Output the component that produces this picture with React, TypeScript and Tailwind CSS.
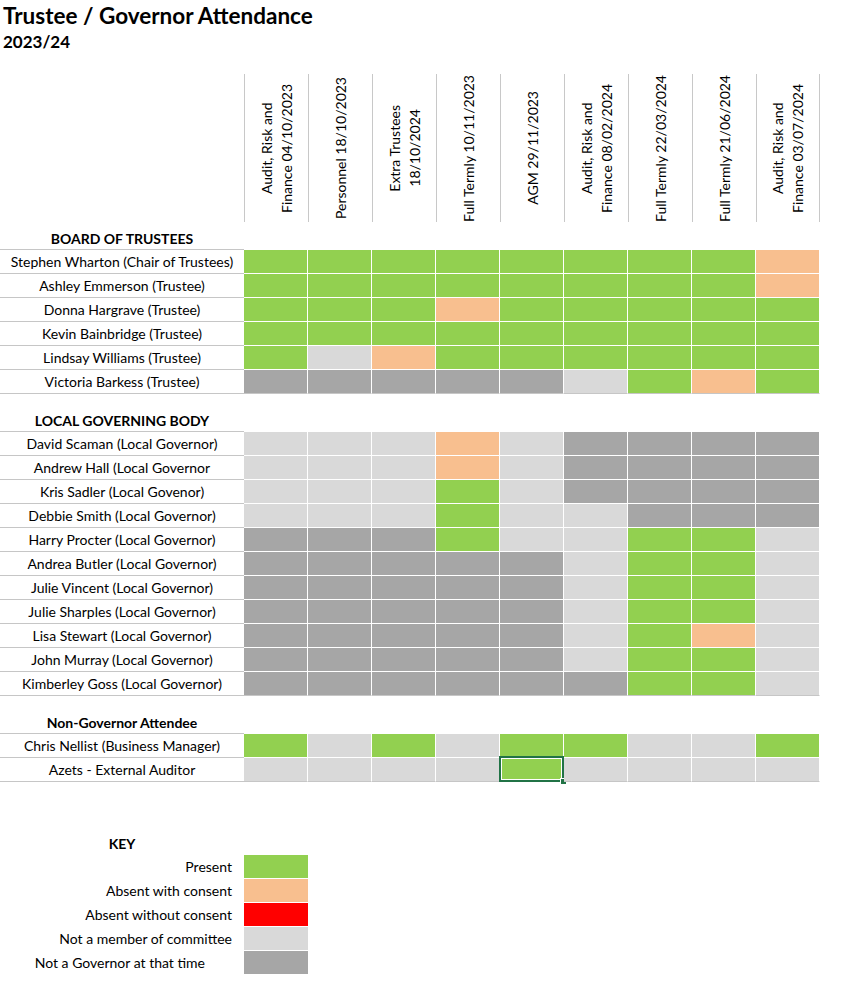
import type { FC } from "react";

type Row = { name: string; cells: string };
type Section = { heading: string; gap: boolean; rows: Row[] };

const meetings = [
  ["Audit, Risk and", "Finance 04/10/2023"],
  ["Personnel 18/10/2023"],
  ["Extra Trustees", "18/10/2024"],
  ["Full Termly 10/11/2023"],
  ["AGM 29/11/2023"],
  ["Audit, Risk and", "Finance 08/02/2024"],
  ["Full Termly 22/03/2024"],
  ["Full Termly 21/06/2024"],
  ["Audit, Risk and", "Finance 03/07/2024"],
];

// G present, P absent with consent, R absent without, L not a member, D not a governor
const fills: Record<string, string> = {
  G: "bg-[#92d050]",
  P: "bg-[#f8bf8f]",
  R: "bg-[#ff0000]",
  L: "bg-[#d9d9d9]",
  D: "bg-[#a6a6a6]",
};

const sections: Section[] = [
  {
    heading: "BOARD OF TRUSTEES",
    gap: false,
    rows: [
      { name: "Stephen Wharton (Chair of Trustees)", cells: "GGGGGGGGP" },
      { name: "Ashley Emmerson (Trustee)", cells: "GGGGGGGGP" },
      { name: "Donna Hargrave (Trustee)", cells: "GGGPGGGGG" },
      { name: "Kevin Bainbridge (Trustee)", cells: "GGGGGGGGG" },
      { name: "Lindsay Williams (Trustee)", cells: "GLPGGGGGG" },
      { name: "Victoria Barkess (Trustee)", cells: "DDDDDLGPG" },
    ],
  },
  {
    heading: "LOCAL GOVERNING BODY",
    gap: true,
    rows: [
      { name: "David Scaman (Local Governor)", cells: "LLLPLDDDD" },
      { name: "Andrew Hall (Local Governor", cells: "LLLPLDDDD" },
      { name: "Kris Sadler (Local Govenor)", cells: "LLLGLDDDD" },
      { name: "Debbie Smith (Local Governor)", cells: "LLLGLLDDD" },
      { name: "Harry Procter (Local Governor)", cells: "DDDGLLGGL" },
      { name: "Andrea Butler (Local Governor)", cells: "DDDDDLGGL" },
      { name: "Julie Vincent (Local Governor)", cells: "DDDDDLGGL" },
      { name: "Julie Sharples (Local Governor)", cells: "DDDDDLGGL" },
      { name: "Lisa Stewart (Local Governor)", cells: "DDDDDLGPL" },
      { name: "John Murray (Local Governor)", cells: "DDDDDLGGL" },
      { name: "Kimberley Goss (Local Governor)", cells: "DDDDDDGGL" },
    ],
  },
  {
    heading: "Non-Governor Attendee",
    gap: true,
    rows: [
      { name: "Chris Nellist (Business Manager)", cells: "GLGLGGLLG" },
      { name: "Azets - External Auditor", cells: "LLLLGLLLL" },
    ],
  },
];

const keyItems = [
  { label: "Present", code: "G", pad: "pr-3" },
  { label: "Absent with consent", code: "P", pad: "pr-3" },
  { label: "Absent without consent", code: "R", pad: "pr-3" },
  { label: "Not a member of committee", code: "L", pad: "pr-3" },
  { label: "Not a Governor at that time", code: "D", pad: "pr-[39px]" },
];

const App: FC = () => {
  return (
    <div className="w-[843px] min-h-[1005px] bg-white text-black font-['Lato',sans-serif] text-[14px]">
      {/* title */}
      <div className="h-[74px] pl-[3px] pt-[2px]">
        <h1 className="text-[22.5px] font-bold leading-[28px]">Trustee / Governor Attendance</h1>
        <h2 className="text-[17px] font-bold leading-[24px]">2023/24</h2>
      </div>

      {/* meeting headers */}
      <div className="flex">
        <div className="w-[244px] shrink-0" />
        {meetings.map((m, i) => (
          <div
            key={i}
            className={`w-16 h-[148px] shrink-0 border-l border-[#c8c8c8] flex items-center justify-center ${
              i === meetings.length - 1 ? "border-r" : ""
            }`}
          >
            <div className="[writing-mode:vertical-rl] rotate-180 text-center leading-[20px] whitespace-nowrap">
              {m.map((line, j) => (
                <div key={j}>{line}</div>
              ))}
            </div>
          </div>
        ))}
      </div>

      {/* attendance grid */}
      {sections.map((s) => (
        <div key={s.heading}>
          <div className="flex">
            <div
              className={`w-[244px] shrink-0 border-b border-[#c6c6c6] flex items-end justify-center font-bold leading-[20px] ${
                s.gap ? "h-[38px]" : "h-[28px]"
              }`}
            >
              {s.heading}
            </div>
          </div>
          {s.rows.map((r, ri) => {
            const last = ri === s.rows.length - 1;
            return (
              <div key={r.name} className="flex">
                <div className="w-[244px] h-6 shrink-0 border-b border-[#c6c6c6] flex items-center justify-center whitespace-nowrap">
                  {r.name}
                </div>
                {r.cells.split("").map((c, ci) => {
                  const selected = r.name.startsWith("Azets") && ci === 4;
                  return (
                    <div
                      key={ci}
                      className={`relative w-16 h-6 shrink-0 border-r border-b border-r-white ${
                        last ? "border-b-[#c6c6c6]" : "border-b-white"
                      } ${fills[c]}`}
                    >
                      {selected && (
                        <div className="absolute -left-px -top-[2px] -right-[1px] -bottom-[1px] border-2 border-[#217346] shadow-[inset_0_0_0_1px_white]">
                          <div className="absolute -right-[5px] -bottom-[5px] w-[7px] h-[7px] bg-[#217346] border border-white" />
                        </div>
                      )}
                    </div>
                  );
                })}
              </div>
            );
          })}
        </div>
      ))}

      {/* key */}
      <div className="h-[52px]" />
      <div className="w-[244px] h-[21px] pb-[3px] flex items-center justify-center font-bold">KEY</div>
      <div className="pb-6">
        {keyItems.map((k) => (
          <div key={k.label} className="flex">
            <div className={`w-[244px] h-6 shrink-0 pb-px flex items-center justify-end whitespace-nowrap ${k.pad}`}>
              {k.label}
            </div>
            <div className={`w-16 h-6 shrink-0 border-b border-white ${fills[k.code]}`} />
          </div>
        ))}
      </div>
    </div>
  );
};

export default App;
